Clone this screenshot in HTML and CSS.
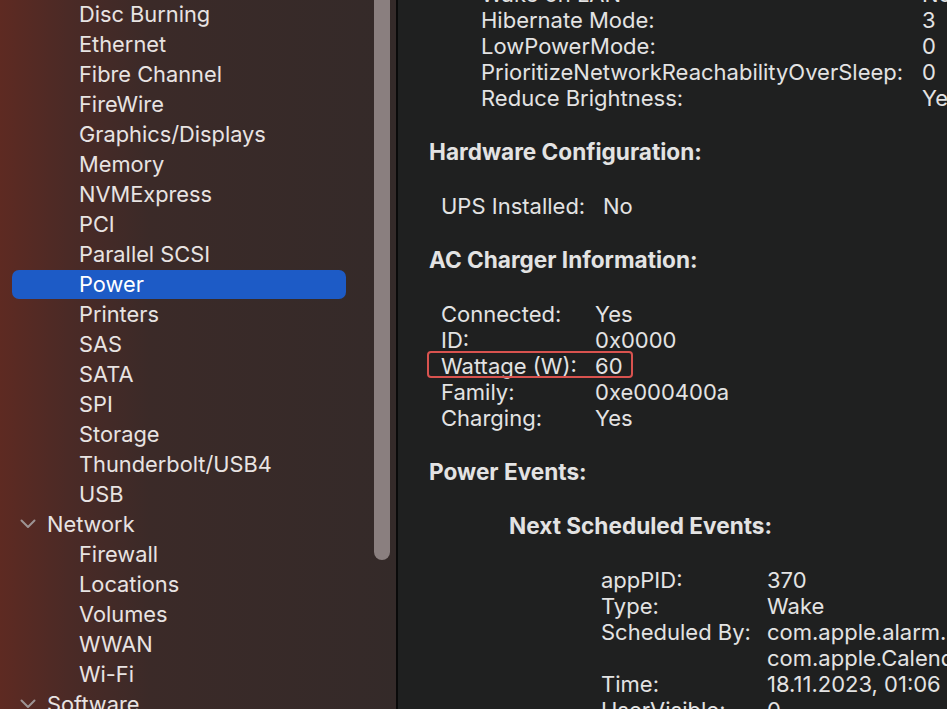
FILE: index.html
```html
<!DOCTYPE html>
<html lang="en">
<head>
    <meta charset="UTF-8">
    <meta name="viewport" content="width=device-width, initial-scale=1.0">
    <title>System Information - Power</title>
    <link rel="stylesheet" href="styles.css">
</head>
<body>
    <div class="window">
        <aside class="sidebar">
            <ul class="tree">
                <li class="item child">Disc Burning</li>
                <li class="item child">Ethernet</li>
                <li class="item child">Fibre Channel</li>
                <li class="item child">FireWire</li>
                <li class="item child">Graphics/Displays</li>
                <li class="item child">Memory</li>
                <li class="item child">NVMExpress</li>
                <li class="item child">PCI</li>
                <li class="item child">Parallel SCSI</li>
                <li class="item child selected">Power</li>
                <li class="item child">Printers</li>
                <li class="item child">SAS</li>
                <li class="item child">SATA</li>
                <li class="item child">SPI</li>
                <li class="item child">Storage</li>
                <li class="item child">Thunderbolt/USB4</li>
                <li class="item child">USB</li>
                <li class="item group">
                    <svg class="chevron" width="16" height="10" viewBox="0 0 16 10"><polyline points="1.5,1.5 8,8 14.5,1.5"/></svg>
                    Network
                </li>
                <li class="item child">Firewall</li>
                <li class="item child">Locations</li>
                <li class="item child">Volumes</li>
                <li class="item child">WWAN</li>
                <li class="item child">Wi-Fi</li>
                <li class="item group">
                    <svg class="chevron" width="16" height="10" viewBox="0 0 16 10"><polyline points="1.5,1.5 8,8 14.5,1.5"/></svg>
                    Software
                </li>
            </ul>
            <!-- overlay scroller -->
            <div class="scroll-thumb"></div>
        </aside>

        <main class="detail">
            <div class="report">
                <div class="props props-settings">
                    <div class="row"><span class="key">Wake on LAN:</span><span>No</span></div>
                    <div class="row"><span class="key">Hibernate Mode:</span><span>3</span></div>
                    <div class="row"><span class="key">LowPowerMode:</span><span>0</span></div>
                    <div class="row"><span class="key">PrioritizeNetworkReachabilityOverSleep:</span><span>0</span></div>
                    <div class="row"><span class="key">Reduce Brightness:</span><span>Yes</span></div>
                </div>

                <h2 class="heading">Hardware Configuration:</h2>
                <div class="props props-hw">
                    <div class="row"><span class="key">UPS Installed:</span><span>No</span></div>
                </div>

                <h2 class="heading">AC Charger Information:</h2>
                <div class="props props-ac">
                    <div class="row"><span class="key">Connected:</span><span>Yes</span></div>
                    <div class="row"><span class="key">ID:</span><span>0x0000</span></div>
                    <div class="row marked"><span class="key">Wattage (W):</span><span>60</span></div>
                    <div class="row"><span class="key">Family:</span><span>0xe000400a</span></div>
                    <div class="row"><span class="key">Charging:</span><span>Yes</span></div>
                </div>

                <h2 class="heading">Power Events:</h2>
                <h3 class="heading sub">Next Scheduled Events:</h3>
                <div class="props props-events">
                    <div class="row"><span class="key">appPID:</span><span>370</span></div>
                    <div class="row"><span class="key">Type:</span><span>Wake</span></div>
                    <div class="row"><span class="key">Scheduled By:</span><span>com.apple.alarm.user-visible-</span></div>
                    <div class="row"><span class="key"></span><span>com.apple.CalendarNotification</span></div>
                    <div class="row"><span class="key">Time:</span><span>18.11.2023, 01:06</span></div>
                    <div class="row"><span class="key">UserVisible:</span><span>0</span></div>
                </div>
            </div>
        </main>
    </div>
</body>
</html>
```

FILE: styles.css
```css
html, body {
    margin: 0;
    height: 100%;
}
body {
    font-family: Inter, "Noto Sans", sans-serif;
    background-color: #1f2020;
    overflow: hidden;
}
.window {
    display: flex;
    height: 709px;
}

/* sidebar */
.sidebar {
    position: relative;
    flex: none;
    width: 396px;
    overflow: hidden;
    border-right: 2px solid #0a0a0a;
    background: linear-gradient(to right, #5e2a22 0%, #4b2a26 17%, #3b2a28 38%, #342a29 100%);
}
.tree {
    list-style: none;
    margin: -1px 0 0;
    padding: 0;
}
.item {
    height: 30px;
    line-height: 30px;
    font-size: 21.8px;
    color: #e8e3e2;
    white-space: nowrap;
}
.child {
    padding-left: 79px;
}
.group {
    display: flex;
    align-items: center;
    gap: 11px;
    padding-left: 20px;
}
.chevron {
    fill: none;
    stroke: #9d9494;
    stroke-width: 2;
    stroke-linecap: round;
    stroke-linejoin: round;
}
.item.selected {
    margin: 1px 50px 0 12px;
    padding-left: 67px;
    height: 29px;
    border-radius: 7px;
    background-color: #1d5bc6;
    color: #fff;
    line-height: 28px;
}
.scroll-thumb {
    position: absolute;
    top: -10px;
    right: 6px;
    width: 16px;
    height: 570px;
    border-radius: 8px;
    background-color: #8a7f7f;
}

/* detail pane */
.detail {
    flex: 1;
    overflow: hidden;
    color: #e3e3e3;
    font-size: 22px;
}
.report {
    margin-top: -19px;
}
.row {
    display: flex;
    height: 26px;
    line-height: 26px;
    white-space: nowrap;
}
.key {
    flex: none;
}
.heading {
    margin: 28px 0;
    padding-left: 31px;
    height: 26px;
    line-height: 26px;
    font-size: 22.6px;
    font-weight: 700;
    white-space: nowrap;
}
.heading.sub {
    padding-left: 111px;
}
.props-settings {
    padding-left: 83px;
}
.props-settings .key {
    width: 441px;
}
.props-hw {
    padding-left: 43px;
}
.props-hw .key {
    width: 162px;
}
.props-ac {
    padding-left: 43px;
}
.props-ac .key {
    width: 154px;
}
.props-events {
    padding-left: 203px;
}
.props-events .key {
    width: 166px;
}
.marked {
    position: relative;
}
.marked::after {
    content: "";
    position: absolute;
    left: -14px;
    top: -2px;
    width: 202px;
    height: 23px;
    border: 2px solid #d9534f;
    border-radius: 4px;
}
```
